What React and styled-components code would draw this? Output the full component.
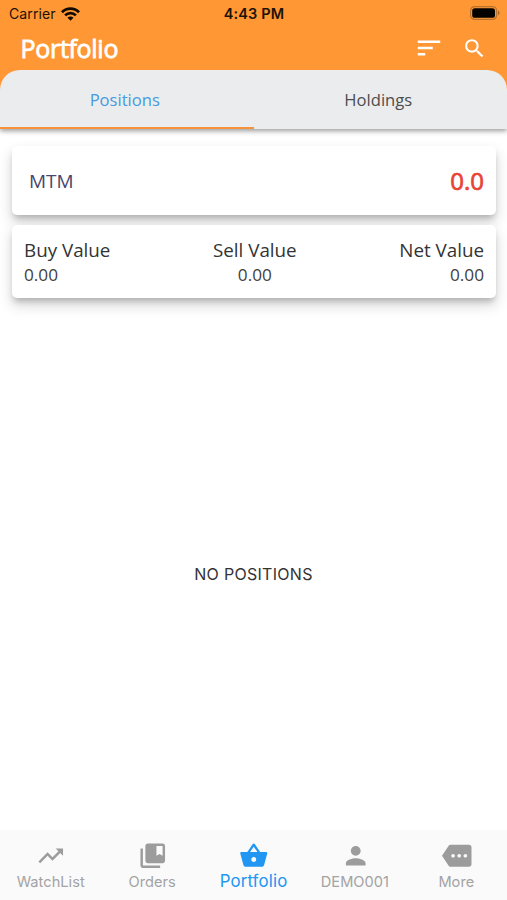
import React from "react";
import styled, { createGlobalStyle } from "styled-components";
import {
  MdSort, MdSearch, MdTrendingUp, MdCollectionsBookmark,
  MdShoppingBasket, MdPerson, MdMore,
} from "react-icons/md";

const GlobalStyle = createGlobalStyle`
  * { box-sizing: border-box; }
  body { margin: 0; background: #fff; font-family: "Open Sans", "Noto Sans", sans-serif; }
`;

const Screen = styled.div`
  width: 507px;
  height: 900px;
  display: flex;
  flex-direction: column;
  background: #fff;
  overflow: hidden;
`;

const Header = styled.header`
  background: #ff9734;
  box-shadow: 0 2px 5px rgba(0, 0, 0, 0.4);
`;

const StatusBar = styled.div`
  height: 27px;
  display: grid;
  grid-template-columns: 1fr auto 1fr;
  align-items: center;
  padding: 0 7px 0 9px;
  font-family: Inter, sans-serif;
  font-size: 14px;
  color: #1c1206;
`;

const Carrier = styled.div`
  display: flex;
  align-items: center;
  gap: 5.5px;
  letter-spacing: 0.12px;
`;

const Clock = styled.div`
  font-weight: 600;
  font-size: 14.5px;
  letter-spacing: 0.15px;
  margin-right: 1px;
`;

const Battery = styled.svg`
  justify-self: end;
  display: block;
  margin-top: -1px;
`;

const AppBar = styled.div`
  height: 43px;
  display: flex;
  align-items: center;
  padding: 0 20px 1px 20.5px;
  color: #fff;
`;

const Title = styled.h1`
  margin: 0;
  flex: 1;
  font-size: 25px;
  line-height: 32px;
  font-weight: 400;
  letter-spacing: -0.3px;
  -webkit-text-stroke: 0.8px #fff;
`;

const Actions = styled.div`
  display: flex;
  align-items: center;
  gap: 18px;
`;

const Tabs = styled.nav`
  height: 59px;
  display: flex;
  background: #ebeced;
  border-radius: 20px 20px 0 0;
`;

const Tab = styled.div`
  flex: 1;
  display: flex;
  align-items: center;
  justify-content: center;
  padding: 2px 4px 0 0;
  font-size: 16.6px;
  color: ${(p) => (p.$active ? "#459be0" : "#4c4d4f")};
  border-bottom: 2px solid ${(p) => (p.$active ? "#f8923a" : "transparent")};
`;

const Content = styled.main`
  flex: 1;
  display: flex;
  flex-direction: column;
  gap: 10px;
  padding: 17px 11px 0 12px;
`;

const Card = styled.section`
  height: ${(p) => p.$height}px;
  flex: none;
  display: flex;
  align-items: center;
  justify-content: space-between;
  padding: 0 12px 0 ${(p) => p.$left}px;
  background: #fff;
  border-radius: 5px;
  box-shadow: 0 5px 6px -2px rgba(0, 0, 0, 0.22), 0 7px 14px 1px rgba(0, 0, 0, 0.14);
`;

const MtmLabel = styled.span`
  font-size: 19px;
  color: #48466d;
`;

const MtmValue = styled.span`
  font-size: 24px;
  -webkit-text-stroke: 0.7px #e94335;
  color: #e94335;
`;

const Metric = styled.div`
  text-align: ${(p) => p.$align};
  color: #333;
`;

const MetricName = styled.div`
  font-size: 18.8px;
  line-height: 26px;
`;

const MetricValue = styled.div`
  font-size: 17.2px;
  line-height: 24px;
  color: #414141;
`;

const Empty = styled.div`
  flex: 1;
  display: flex;
  align-items: center;
  justify-content: center;
  padding: 9px 1px 0 0;
  font-family: Inter, sans-serif;
  font-size: 16px;
  letter-spacing: 0.3px;
  color: #333;
`;

const BottomNav = styled.nav`
  height: 70px;
  display: flex;
  background: #fafafa;
`;

const NavItem = styled.div`
  flex: 1;
  display: flex;
  flex-direction: column;
  align-items: center;
  padding-top: 11px;
  color: ${(p) => (p.$active ? "#2196f3" : "#9c9c9c")};

  svg {
    margin-left: 1px;
  }
`;

const NavLabel = styled.span`
  height: 22px;
  font-family: Inter, sans-serif;
  font-size: ${(p) => (p.$active ? 16.8 : 14.6)}px;
  letter-spacing: ${(p) => (p.$active ? 0.15 : 0.05)}px;
  line-height: ${(p) => (p.$active ? 20 : 22)}px;
  color: ${(p) => (p.$active ? "#2196f3" : "#a3a3a3")};
`;

const NAV = [
  { label: "WatchList", Icon: MdTrendingUp },
  { label: "Orders", Icon: MdCollectionsBookmark },
  { label: "Portfolio", Icon: MdShoppingBasket, active: true },
  { label: "DEMO001", Icon: MdPerson },
  { label: "More", Icon: MdMore },
];

const METRICS = [
  { name: "Buy Value", value: "0.00", align: "left" },
  { name: "Sell Value", value: "0.00", align: "center" },
  { name: "Net Value", value: "0.00", align: "right" },
];

const WifiIcon = () => (
  <svg width="19" height="14" viewBox="0 0 19 14" fill="none" stroke="#120b02" strokeWidth="2.7">
    <path d="M1 5.2C5.7.5 13.3.5 18 5.2" />
    <path d="M4.1 8.4c3-3 7.800-3 10.800 0" />
    <path d="M9.500 13.800 6.500 10.700c1.700-1.600 4.300-1.600 6 0Z" fill="#120b02" stroke="none" />
  </svg>
);

export default function App() {
  return (
    <Screen>
      <GlobalStyle />
      <Header>
        <StatusBar>
          <Carrier>Carrier <WifiIcon /></Carrier>
          <Clock>4:43 PM</Clock>
          <Battery width="30" height="14" viewBox="0 0 30 14">
            <rect x="0.6" y="0.6" width="26" height="12.800" rx="4" fill="none" stroke="#b8722d" strokeWidth="1.200" />
            <rect x="2.200" y="2.200" width="22.800" height="9.600" rx="2.600" fill="#050300" />
            <path d="M28 4.800c2 .6 2 3.800 0 4.400Z" fill="#a8682b" />
          </Battery>
        </StatusBar>
        <AppBar>
          <Title>Portfolio</Title>
          <Actions>
            <MdSort size={30} />
            <MdSearch size={25} />
          </Actions>
        </AppBar>
        <Tabs>
          <Tab $active>Positions</Tab>
          <Tab>Holdings</Tab>
        </Tabs>
      </Header>
      <Content>
        <Card $height={69} $left={17}>
          <MtmLabel>MTM</MtmLabel>
          <MtmValue>0.0</MtmValue>
        </Card>
        <Card $height={73} $left={12}>
          {METRICS.map((m) => (
            <Metric key={m.name} $align={m.align}>
              <MetricName>{m.name}</MetricName>
              <MetricValue>{m.value}</MetricValue>
            </Metric>
          ))}
        </Card>
        <Empty>NO POSITIONS</Empty>
      </Content>
      <BottomNav>
        {NAV.map(({ label, Icon, active }) => (
          <NavItem key={label} $active={active}>
            <Icon size={29.5} />
            <NavLabel $active={active}>{label}</NavLabel>
          </NavItem>
        ))}
      </BottomNav>
    </Screen>
  );
}
